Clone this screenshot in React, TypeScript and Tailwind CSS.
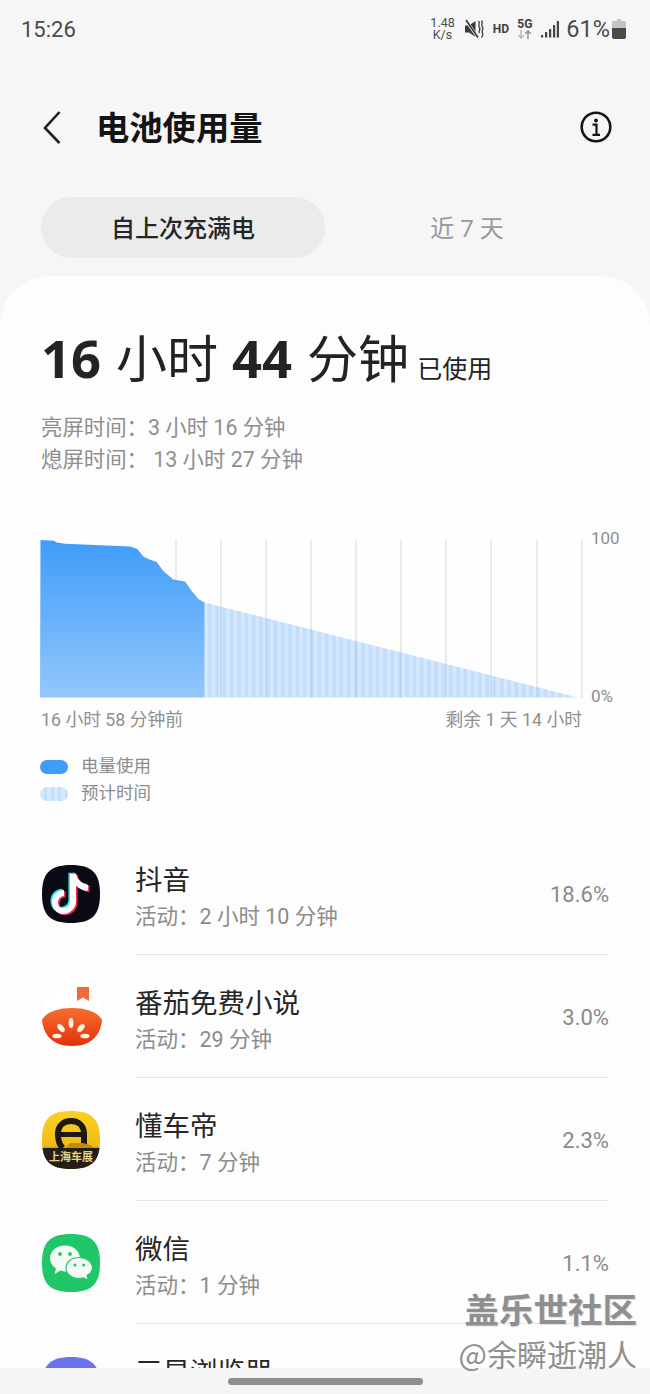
import React from "react";

const FONT = { fontFamily: 'Roboto, "Noto Sans CJK SC", sans-serif' };
const SQUIRCLE = "M29 0C50 0 58 8 58 29C58 50 50 58 29 58C8 58 0 50 0 29C0 8 8 0 29 0Z";

function DouyinIcon() {
  const note = "M31 9V36C31 42 26 46 21 46C16 46 13 42 13 37C13 32 17 28 22 28M31 9C32 16 38 22 46 23";
  return (
    <svg width="58" height="58" viewBox="0 0 58 58">
      <path d={SQUIRCLE} fill="#0b0b16" />
      <g fill="none" strokeWidth="6">
        <path d={note} stroke="#2be4e6" transform="translate(-1.6 -1.2)" />
        <path d={note} stroke="#f2295b" transform="translate(1.6 1.2)" />
        <path d={note} stroke="#ffffff" />
      </g>
    </svg>
  );
}

function TomatoIcon() {
  return (
    <svg width="60" height="62" viewBox="0 0 60 62" className="-mt-[1px]">
      <path d={SQUIRCLE} transform="translate(1 2)" fill="#ffffff" />
      <path d="M35 0H47V14L41 10.500L35 14Z" fill="#ef6a3c" />
      <defs>
        <linearGradient id="tom" x1="0" y1="0" x2="0" y2="1">
          <stop offset="0" stopColor="#f5702e" />
          <stop offset="1" stopColor="#e4300c" />
        </linearGradient>
      </defs>
      <path d="M0 33C4 25 16 21 30 21C44 21 56 25 60 33C59 45 52 59 30 59C8 59 1 45 0 33Z" fill="url(#tom)" />
      <g fill="#fff3e6">
        <ellipse cx="29" cy="36" rx="2.400" ry="5" />
        <ellipse cx="19" cy="41" rx="2.600" ry="4.800" transform="rotate(-40 19 41)" />
        <ellipse cx="39" cy="41" rx="2.600" ry="4.800" transform="rotate(40 39 41)" />
        <ellipse cx="15" cy="49" rx="4.600" ry="2.300" />
        <ellipse cx="43" cy="49" rx="4.600" ry="2.300" />
      </g>
    </svg>
  );
}

function DongchediIcon() {
  return (
    <svg width="58" height="58" viewBox="0 0 58 58" style={{ fontFamily: '"Noto Sans CJK SC", sans-serif' }}>
      <defs>
        <clipPath id="dcd"><path d={SQUIRCLE} /></clipPath>
        <linearGradient id="dcdbg" x1="0" y1="0" x2="0" y2="1">
          <stop offset="0" stopColor="#fdd021" />
          <stop offset="0.6" stopColor="#efbc16" />
          <stop offset="0.66" stopColor="#a5852a" />
        </linearGradient>
      </defs>
      <g clipPath="url(#dcd)">
        <rect width="58" height="58" fill="url(#dcdbg)" />
        <rect y="37" width="58" height="21" fill="#231f14" />
        <path d="M21 37C17 34 16 28 16 23C16 15 21 10 29 10C37 10 42 15 42 23V34" fill="none" stroke="#1c1a14" strokeWidth="6" />
        <rect x="15" y="21" width="28" height="5" fill="#1c1a14" />
        <path d="M24 37L28 32H41L50 34.500V37H24Z" fill="#c08a16" />
        <text x="29" y="50" textAnchor="middle" fontSize="11" fontWeight="700" fill="#e4d38c">上海车展</text>
      </g>
    </svg>
  );
}

function WechatIcon() {
  return (
    <svg width="58" height="58" viewBox="0 0 58 58">
      <path d={SQUIRCLE} fill="#1fc768" />
      <path d="M23 11.500C14 11.500 8 17.500 8 24.500C8 28.500 10.500 32 14 34.500L12.500 40L18.500 36.500C20 37 21.500 37.500 23 37.500C32 37.500 38 31.500 38 24.500C38 17.500 32 11.500 23 11.500Z" fill="#f4fbf6" />
      <path d="M37 23.500C29.500 23.500 24 28 24 34C24 40 29.500 44.500 37 44.500C38.500 44.500 40 44.200 41.500 43.800L46.500 46.500L45 41.500C48.500 39.500 50.500 37 50.500 34C50.500 28 44.500 23.500 37 23.500Z" fill="#f4fbf6" stroke="#1fc768" strokeWidth="1.200" />
      <g fill="#1fc768">
        <circle cx="18" cy="20" r="1.900" />
        <circle cx="28" cy="20" r="1.900" />
        <circle cx="33" cy="31" r="1.500" />
        <circle cx="41.700" cy="31" r="1.500" />
      </g>
    </svg>
  );
}

function BrowserIcon() {
  return (
    <svg width="58" height="58" viewBox="0 0 58 58">
      <path d={SQUIRCLE} fill="#6b72ee" />
      <circle cx="29" cy="29" r="10" fill="#ffffff" />
    </svg>
  );
}

function AppRow({ icon, name, sub, pct, last }: { icon: React.ReactNode; name: string; sub: string; pct?: string; last?: boolean }) {
  return (
    <div className="flex h-[123px] shrink-0 pl-[42px] pr-[41px]">
      <div className="w-[94px] shrink-0 pt-[33px] flex items-start">{icon}</div>
      <div className={`flex-1 min-w-0 flex items-start justify-between ${last ? "" : "border-b border-[#e6e6e6]"}`}>
        <div className="pt-[29px] -ml-[1px]">
          <div className="text-[27.500px] leading-[40px] text-[#262626]">{name}</div>
          <div className="text-[21.500px] leading-[32px] text-[#8c8c8c]">{sub}</div>
        </div>
        {pct && <div className="text-[22px] leading-[32px] text-[#8a8a8a] mt-[47px]">{pct}</div>}
      </div>
    </div>
  );
}

const curve =
  "M0.5 0L14 0.8L16.7 2.5L25 3.8L90 6.5L97.3 9L103.3 16.5L108.3 19L116.7 22L123.3 31L133.3 39.5L145 41.5L151.7 51L158.3 59L164.5 62.5";
const gridXs = [136, 181, 226, 271, 316, 361, 406, 451, 497, 542];

function Chart() {
  return (
    <svg width="543" height="158" viewBox="0 0 543 158" className="block shrink-0">
      <defs>
        <linearGradient id="used" x1="0" y1="0" x2="0" y2="1">
          <stop offset="0" stopColor="#3f9cf9" />
          <stop offset="1" stopColor="#93c7fb" />
        </linearGradient>
        <pattern id="stripes" width="7.3" height="158" patternUnits="userSpaceOnUse" x="164.5">
          <rect width="7.3" height="158" fill="#d6e8fc" />
          <rect x="3.4" width="3.9" height="158" fill="#c2defb" />
        </pattern>
        <clipPath id="fore"><path d="M164.5 62.5L538 157.5H164.5Z" /></clipPath>
      </defs>
      {gridXs.map((x) => (
        <rect key={x} x={x - 0.75} y="0" width="1.5" height="158" fill="#e3e3e3" />
      ))}
      <path d="M164.5 62.5L538 157.5H164.5Z" fill="url(#stripes)" />
      <g clipPath="url(#fore)">
        {gridXs.slice(1, 9).map((x) => (
          <rect key={x} x={x - 0.75} y="0" width="1.5" height="158" fill="#9fb8d2" opacity="0.35" />
        ))}
      </g>
      <path d={`${curve}V157.5H0Z`} fill="url(#used)" />
    </svg>
  );
}

function StatusIcons() {
  return (
    <div className="flex items-center text-[#4a4a4a]">
      <div className="text-[12.500px] leading-[12px] text-center w-[24px]">1.48<br />K/s</div>
      <svg width="19" height="20" viewBox="0 0 19 20" className="ml-[11px]">
        <path d="M0 6.500H4L10.500 2V18L4 13.500H0Z" fill="#3a3a3a" />
        <path d="M0.500 0.500L12.500 18" stroke="#f6f6f6" strokeWidth="3" />
        <path d="M1 1L13 18.500" stroke="#3a3a3a" strokeWidth="1.700" />
        <path d="M13.500 2C15.500 4.500 12.500 6 14.500 8.500C16 10.500 13 12 14.500 14M16.500 1.500C18.500 4 15.500 5.500 17.500 8C19 10 16 12 17.500 14C18.500 15.500 17.500 17 16.500 18.500" stroke="#3a3a3a" strokeWidth="1.300" fill="none" />
      </svg>
      <div className="text-[12px] font-bold ml-[8px] w-[17px] text-[#3f3f3f] text-center leading-[16px]">HD</div>
      <div className="flex flex-col items-center ml-[8px] w-[15px]">
        <div className="text-[12px] leading-[11px] font-bold text-[#3f3f3f]">5G</div>
        <svg width="15" height="9" viewBox="0 0 15 9">
          <path d="M4 0V8M1.200 5.200L4 8L6.800 5.200" stroke="#b5b5b5" strokeWidth="1.400" fill="none" />
          <path d="M11 9V1M8.200 3.800L11 1L13.800 3.800" stroke="#8d8d8d" strokeWidth="1.400" fill="none" />
        </svg>
      </div>
      <svg width="18" height="17" viewBox="0 0 18 17" className="ml-[9px]">
        <rect x="0" y="14" width="2.200" height="2.500" fill="#444" />
        <rect x="4" y="11" width="2.200" height="5.500" fill="#444" />
        <rect x="8" y="8" width="2.200" height="8.500" fill="#444" />
        <rect x="12" y="4" width="2.200" height="12.500" fill="#444" />
        <rect x="15.800" y="0" width="2.200" height="16.500" fill="#444" />
      </svg>
      <div className="text-[23.500px] leading-[28px] ml-[7px] text-[#4a4a4a]">61%</div>
      <svg width="14" height="20" viewBox="0 0 14 20" className="ml-[2px]">
        <path d="M5 0H9V2H12.500C13.300 2 14 2.700 14 3.500V9H0V3.500C0 2.700 0.700 2 1.500 2H5Z" fill="#c4c4c4" />
        <path d="M0 9H14V18C14 19.100 13.100 20 12 20H2C0.900 20 0 19.100 0 18Z" fill="#4a4a4a" />
      </svg>
    </div>
  );
}

export default function App() {
  return (
    <div className="relative w-[650px] h-[1394px] overflow-hidden bg-[#f6f6f6] flex flex-col" style={FONT}>
      {/* status bar */}
      <div className="h-[58px] shrink-0 flex items-center justify-between pl-[21px] pr-[24px]">
        <div className="text-[22px] text-[#4a4a4a]">15:26</div>
        <StatusIcons />
      </div>

      {/* header */}
      <div className="h-[139px] shrink-0 flex items-start pl-[42px] pr-[38px] pt-[47px]">
        <svg width="20" height="36" viewBox="0 0 20 36" className="mt-[5px]">
          <path d="M17.500 2L3 18L17.500 33" stroke="#1f1f1f" strokeWidth="2.600" fill="none" />
        </svg>
        <div className="ml-[34px] text-[33.300px] leading-[48px] font-bold text-[#141414]">电池使用量</div>
        <svg width="32" height="32" viewBox="0 0 32 32" className="ml-auto mt-[6px]">
          <circle cx="16" cy="16" r="14.300" stroke="#141414" strokeWidth="2.600" fill="none" />
          <circle cx="16" cy="9.500" r="1.900" fill="#141414" />
          <path d="M12.500 13.700H16.500V23.500M12.500 23.800H20" stroke="#141414" strokeWidth="2.200" fill="none" />
        </svg>
      </div>

      {/* tabs */}
      <div className="shrink-0 flex px-[41px] h-[61px]">
        <div className="w-[284px] rounded-full bg-[#ebebeb] flex items-center justify-center pt-[3px] text-[24px] font-medium text-[#262626]">自上次充满电</div>
        <div className="flex-1 flex items-center justify-center pt-[3px] text-[24px] text-[#9a9a9a]">近 7 天</div>
      </div>

      {/* card */}
      <div className="mt-[18px] flex-1 min-h-0 rounded-t-[50px] bg-[#fdfdfd]">
        <div className="pl-[41px] pt-[47px] h-[90px] flex items-baseline text-[#232323]" style={{ fontFamily: '"Open Sans", "Noto Sans CJK SC", sans-serif' }}>
          <span className="text-[52.500px] leading-[70px] font-bold">16</span>
          <span className="text-[51px] leading-[70px] ml-[15px]">小时</span>
          <span className="text-[52.500px] leading-[70px] font-bold ml-[14px]">44</span>
          <span className="text-[51px] leading-[70px] ml-[15px]">分钟</span>
          <span className="text-[25px] leading-[40px] ml-[8px]">已使用</span>
        </div>
        <div className="pl-[41px] mt-[46px] text-[21.400px] leading-[32px] text-[#8f8f8f]">
          <div>亮屏时间：3 小时 16 分钟</div>
          <div>熄屏时间： 13 小时 27 分钟</div>
        </div>

        {/* chart */}
        <div className="pl-[40px] mt-[64px] flex">
          <Chart />
          <div className="flex flex-col justify-between ml-[8px] -mt-[14px] -mb-[11px] h-[183px] text-[17px] leading-[24px] text-[#8f8f8f] pb-[1px]">
            <div>100</div>
            <div>0%</div>
          </div>
        </div>
        <div className="pl-[41px] pr-[68px] mt-[9px] flex justify-between text-[17.800px] leading-[26px] text-[#8f8f8f]">
          <div>16 小时 58 分钟前</div>
          <div>剩余 1 天 14 小时</div>
        </div>

        {/* legend */}
        <div className="pl-[40px] mt-[20px] text-[17.500px] leading-[27px] text-[#8c8c8c]">
          <div className="flex items-center">
            <div className="w-[28px] h-[14px] rounded-full bg-[#3f9cf9]" />
            <div className="ml-[13px]">电量使用</div>
          </div>
          <div className="flex items-center">
            <div className="w-[28px] h-[14px] rounded-full bg-[repeating-linear-gradient(90deg,#d6e8fc_0px,#d6e8fc_4px,#c2defb_4px,#c2defb_7px)]" />
            <div className="ml-[13px]">预计时间</div>
          </div>
        </div>

        {/* list */}
        <div className="mt-[25px]">
          <AppRow icon={<DouyinIcon />} name="抖音" sub="活动：2 小时 10 分钟" pct="18.6%" />
          <AppRow icon={<TomatoIcon />} name="番茄免费小说" sub="活动：29 分钟" pct="3.0%" />
          <AppRow icon={<DongchediIcon />} name="懂车帝" sub="活动：7 分钟" pct="2.3%" />
          <AppRow icon={<WechatIcon />} name="微信" sub="活动：1 分钟" pct="1.1%" />
          <AppRow icon={<BrowserIcon />} name="三星浏览器" sub="" last />
        </div>
      </div>

      {/* navigation bar */}
      <div className="absolute left-0 right-0 bottom-0 h-[26px] bg-[#f5f5f5] flex items-center justify-center">
        <div className="w-[195px] h-[7px] rounded-full bg-[#8e8e8e]" />
      </div>

      {/* watermark */}
      <div className="absolute right-[13px] top-[1286px] flex flex-col items-end" style={{ fontFamily: '"Noto Sans CJK SC", sans-serif' }}>
        <div className="text-[34.500px] leading-[44px] font-bold text-[#8f8f8f] [text-shadow:1px_1px_0_#e0e0e0]">盖乐世社区</div>
        <div className="text-[30px] leading-[46px] text-[#8f8f8f]">@余瞬逝潮人</div>
      </div>
    </div>
  );
}
